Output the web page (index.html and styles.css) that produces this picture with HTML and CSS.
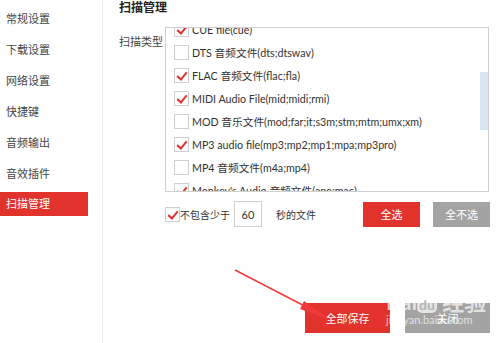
FILE: index.html
```html
<!DOCTYPE html>
<html lang="zh-CN">
<head>
  <meta charset="UTF-8">
  <title>扫描管理</title>
  <link rel="stylesheet" href="styles.css">
</head>
<body>
  <div class="sidebar">
    <a href="#">常规设置</a>
    <a href="#">下载设置</a>
    <a href="#">网络设置</a>
    <a href="#">快捷键</a>
    <a href="#">音频输出</a>
    <a href="#">音效插件</a>
    <a href="#" class="active">扫描管理</a>
  </div>

  <div class="main">
    <h2>扫描管理</h2>
    <div class="scan-row">
      <span class="label">扫描类型</span>
      <div class="listbox">
        <ul class="types">
          <li><span class="box checked"></span>CUE file(cue)</li>
          <li><span class="box"></span>DTS 音频文件(dts;dtswav)</li>
          <li><span class="box checked"></span>FLAC 音频文件(flac;fla)</li>
          <li><span class="box checked"></span>MIDI Audio File(mid;midi;rmi)</li>
          <li><span class="box"></span>MOD 音乐文件(mod;far;it;s3m;stm;mtm;umx;xm)</li>
          <li><span class="box checked"></span>MP3 audio file(mp3;mp2;mp1;mpa;mp3pro)</li>
          <li><span class="box"></span>MP4 音频文件(m4a;mp4)</li>
          <li><span class="box checked"></span>Monkey's Audio 音频文件(ape;mac)</li>
        </ul>
        <div class="scrollbar"><div class="thumb"></div></div>
      </div>
    </div>

    <div class="filter-row">
      <span class="box checked"></span>
      <span>不包含少于</span>
      <input type="text" class="seconds" value="60">
      <span class="unit">秒的文件</span>
      <button class="btn red">全选</button>
      <button class="btn gray">全不选</button>
    </div>

    <div class="save-row">
      <button class="btn red big">全部保存</button>
      <button class="btn gray big">关闭</button>
    </div>
  </div>

  <!-- arrow drawn over the screenshot -->
  <svg class="arrow" width="500" height="343" viewBox="0 0 500 343">
    <path d="M235 270 L318 313" stroke="#ee3a3a" stroke-width="1.5" fill="none"/>
    <path d="M332 321 L300 309 L304 301 Z" fill="#ee3a3a"/>
  </svg>

  <div class="watermark">
    <div class="wm-logo">Bai<span class="paw">du</span> 经验</div>
    <div class="wm-url">jingyan.baidu.com</div>
  </div>
</body>
</html>
```

FILE: styles.css
```css
* {
  margin: 0;
  padding: 0;
  box-sizing: border-box;
}
body {
  width: 500px;
  height: 343px;
  display: flex;
  background: #fff;
  font-family: Lato, "Noto Sans CJK SC", sans-serif;
  font-size: 11px;
  color: #333;
  position: relative;
  overflow: hidden;
}
.sidebar {
  width: 103px;
  padding-top: 6px;
  display: flex;
  flex-direction: column;
  border-right: 1px solid #ececec;
}
.sidebar a {
  display: block;
  width: 88px;
  height: 31px;
  line-height: 25px;
  padding-left: 6px;
  color: #444;
  text-decoration: none;
  font-size: 11px;
}
.sidebar a.active {
  background: #e1322c;
  color: #fff;
  height: 24px;
  line-height: 24px;
}
.main {
  flex: 1;
  padding-left: 16px;
}
h2 {
  font-size: 12px;
  font-weight: bold;
  color: #222;
  line-height: 16px;
}
.scan-row {
  display: flex;
  margin-top: 11px;
}
.label {
  width: 46px;
  padding-top: 6px;
  color: #444;
}
.listbox {
  width: 324px;
  height: 165px;
  border: 1px solid #cfcfcf;
  overflow: hidden;
  display: flex;
}
.types {
  list-style: none;
  flex: 1;
  margin-top: -10px;
  padding-left: 8px;
  font-size: 10.7px;
}
.types li {
  height: 23px;
  display: flex;
  align-items: center;
  white-space: nowrap;
  color: #333;
}
.box {
  width: 15px;
  height: 15px;
  border: 1px solid #cfcfcf;
  background: #fff;
  flex-shrink: 0;
  position: relative;
}
.types .box {
  margin-right: 3px;
}
.box.checked::after {
  content: "";
  position: absolute;
  left: 4px;
  top: 1px;
  width: 4px;
  height: 8px;
  border: solid #e1322c;
  border-width: 0 2px 2px 0;
  transform: rotate(40deg);
}
.scrollbar {
  width: 8px;
  height: 100%;
  padding-top: 44px;
}
.thumb {
  height: 58px;
  background: #d7e6f2;
}
.filter-row {
  display: flex;
  align-items: center;
  height: 26px;
  margin-top: 9px;
  padding-left: 46px;
  font-size: 10px;
  color: #333;
}
.seconds {
  width: 28px;
  height: 26px;
  margin-left: 4px;
  border: 1px solid #cfcfcf;
  text-align: center;
  font-family: inherit;
  font-size: 11px;
  color: #333;
}
.unit {
  margin-left: 14px;
}
.btn {
  border: none;
  color: #fff;
  font-family: inherit;
  font-size: 11px;
  width: 57px;
  height: 25px;
}
.filter-row .red {
  margin-left: 47px;
}
.filter-row .gray {
  margin-left: 13px;
}
.red {
  background: #e1322c;
}
.gray {
  background: #a3a3a3;
}
.save-row {
  display: flex;
  margin-top: 76px;
  padding-left: 186px;
  gap: 15px;
}
.btn.big {
  width: 85px;
  height: 30px;
}
.arrow {
  position: absolute;
  left: 0;
  top: 0;
  pointer-events: none;
}
.watermark {
  position: absolute;
  left: 386px;
  top: 290px;
  color: rgba(255, 255, 255, 0.7);
  pointer-events: none;
}
.wm-logo {
  font-size: 22px;
  font-weight: bold;
  line-height: 24px;
}
.paw {
  display: inline-block;
  background: rgba(255, 255, 255, 0.7);
  color: #b5b5b5;
  border-radius: 5px;
  font-size: 14px;
  line-height: 16px;
  padding: 0 2px;
}
.wm-url {
  font-size: 11px;
  line-height: 12px;
}
```
